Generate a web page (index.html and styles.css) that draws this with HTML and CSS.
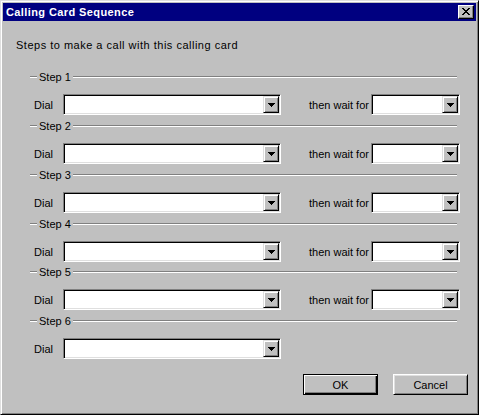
FILE: index.html
```html
<!DOCTYPE html>
<html>
<head>
<meta charset="utf-8">
<link rel="stylesheet" href="styles.css">
</head>
<body>
<div class="window">
  <div class="titlebar">
    <span class="title">Calling Card Sequence</span>
    <div class="close">
      <svg width="8" height="7" viewBox="0 0 8 7" shape-rendering="crispEdges"><path fill="#000" d="M0 0h2v1h-2z M6 0h2v1h-2z M1 1h2v1h-2z M5 1h2v1h-2z M2 2h4v1h-4z M3 3h2v1h-2z M2 4h4v1h-4z M1 5h2v1h-2z M5 5h2v1h-2z M0 6h2v1h-2z M6 6h2v1h-2z"/></svg>
    </div>
  </div>
  <div class="client">
    <div class="intro">Steps to make a call with this calling card</div>
    <div class="steps">
      <div class="group">
        <div class="header"><span class="seg"></span><span class="label">Step 1</span><span class="line"></span></div>
        <div class="row">
          <span class="dial">Dial</span>
          <div class="combo wide"><div class="drop"><svg width="7" height="4" viewBox="0 0 7 4" shape-rendering="crispEdges"><path d="M0 0h7v1h-1v1h-1v1h-1v1h-1v-1h-1v-1h-1v-1h-1z"/></svg></div></div>
          <span class="wait">then wait for</span>
          <div class="combo narrow"><div class="drop"><svg width="7" height="4" viewBox="0 0 7 4" shape-rendering="crispEdges"><path d="M0 0h7v1h-1v1h-1v1h-1v1h-1v-1h-1v-1h-1v-1h-1z"/></svg></div></div>
        </div>
      </div>
      <div class="group">
        <div class="header"><span class="seg"></span><span class="label">Step 2</span><span class="line"></span></div>
        <div class="row">
          <span class="dial">Dial</span>
          <div class="combo wide"><div class="drop"><svg width="7" height="4" viewBox="0 0 7 4" shape-rendering="crispEdges"><path d="M0 0h7v1h-1v1h-1v1h-1v1h-1v-1h-1v-1h-1v-1h-1z"/></svg></div></div>
          <span class="wait">then wait for</span>
          <div class="combo narrow"><div class="drop"><svg width="7" height="4" viewBox="0 0 7 4" shape-rendering="crispEdges"><path d="M0 0h7v1h-1v1h-1v1h-1v1h-1v-1h-1v-1h-1v-1h-1z"/></svg></div></div>
        </div>
      </div>
      <div class="group">
        <div class="header"><span class="seg"></span><span class="label">Step 3</span><span class="line"></span></div>
        <div class="row">
          <span class="dial">Dial</span>
          <div class="combo wide"><div class="drop"><svg width="7" height="4" viewBox="0 0 7 4" shape-rendering="crispEdges"><path d="M0 0h7v1h-1v1h-1v1h-1v1h-1v-1h-1v-1h-1v-1h-1z"/></svg></div></div>
          <span class="wait">then wait for</span>
          <div class="combo narrow"><div class="drop"><svg width="7" height="4" viewBox="0 0 7 4" shape-rendering="crispEdges"><path d="M0 0h7v1h-1v1h-1v1h-1v1h-1v-1h-1v-1h-1v-1h-1z"/></svg></div></div>
        </div>
      </div>
      <div class="group">
        <div class="header"><span class="seg"></span><span class="label">Step 4</span><span class="line"></span></div>
        <div class="row">
          <span class="dial">Dial</span>
          <div class="combo wide"><div class="drop"><svg width="7" height="4" viewBox="0 0 7 4" shape-rendering="crispEdges"><path d="M0 0h7v1h-1v1h-1v1h-1v1h-1v-1h-1v-1h-1v-1h-1z"/></svg></div></div>
          <span class="wait">then wait for</span>
          <div class="combo narrow"><div class="drop"><svg width="7" height="4" viewBox="0 0 7 4" shape-rendering="crispEdges"><path d="M0 0h7v1h-1v1h-1v1h-1v1h-1v-1h-1v-1h-1v-1h-1z"/></svg></div></div>
        </div>
      </div>
      <div class="group">
        <div class="header"><span class="seg"></span><span class="label">Step 5</span><span class="line"></span></div>
        <div class="row">
          <span class="dial">Dial</span>
          <div class="combo wide"><div class="drop"><svg width="7" height="4" viewBox="0 0 7 4" shape-rendering="crispEdges"><path d="M0 0h7v1h-1v1h-1v1h-1v1h-1v-1h-1v-1h-1v-1h-1z"/></svg></div></div>
          <span class="wait">then wait for</span>
          <div class="combo narrow"><div class="drop"><svg width="7" height="4" viewBox="0 0 7 4" shape-rendering="crispEdges"><path d="M0 0h7v1h-1v1h-1v1h-1v1h-1v-1h-1v-1h-1v-1h-1z"/></svg></div></div>
        </div>
      </div>
      <div class="group last">
        <div class="header"><span class="seg"></span><span class="label">Step 6</span><span class="line"></span></div>
        <div class="row">
          <span class="dial">Dial</span>
          <div class="combo wide"><div class="drop"><svg width="7" height="4" viewBox="0 0 7 4" shape-rendering="crispEdges"><path d="M0 0h7v1h-1v1h-1v1h-1v1h-1v-1h-1v-1h-1v-1h-1z"/></svg></div></div>
        </div>
      </div>
    </div>
    <div class="buttons">
      <div class="btn default">OK</div>
      <div class="btn">Cancel</div>
    </div>
  </div>
</div>
</body>
</html>
```

FILE: styles.css
```css
html, body {
  margin: 0;
  padding: 0;
  background: #c0c0c0;
}
body {
  font-family: "Liberation Sans", Arial, sans-serif;
  font-size: 11px;
  color: #000;
}
.window {
  width: 479px;
  height: 415px;
  box-sizing: border-box;
  background: #c0c0c0;
  border: 1px solid;
  border-color: #dfdfdf #000 #000 #dfdfdf;
  box-shadow: inset 1px 1px #fff, inset -1px -1px #808080;
  padding: 2px;
  display: flex;
  flex-direction: column;
}
.titlebar {
  height: 18px;
  flex: 0 0 18px;
  background: #000080;
  color: #fff;
  display: flex;
  align-items: center;
  justify-content: space-between;
  padding: 0 2px 0 3px;
  margin-bottom: 1px;
}
.title {
  font-weight: bold;
  font-size: 11px;
  letter-spacing: 0.4px;
  line-height: 18px;
}
.close {
  width: 16px;
  height: 14px;
  box-sizing: border-box;
  background: #c0c0c0;
  border: 1px solid;
  border-color: #fff #000 #000 #fff;
  box-shadow: inset -1px -1px #808080;
  display: flex;
  align-items: center;
  justify-content: center;
  padding: 0 1px 1px 0;
}
.close svg { display: block; }
.client {
  flex: 1;
  display: flex;
  flex-direction: column;
}
.intro {
  margin: 16px 0 0 13px;
  line-height: 14px;
  height: 14px;
  letter-spacing: 0.5px;
}
.steps {
  margin-top: 18px;
  display: flex;
  flex-direction: column;
  gap: 4px;
}
.group {
  display: flex;
  flex-direction: column;
  gap: 10px;
}
.group:nth-child(4) {
  margin-bottom: -1px;
}
.header {
  height: 14px;
  display: flex;
  align-items: center;
  margin: 0 19px 0 27px;
}
.seg, .line {
  height: 0;
  border-top: 1px solid #808080;
  border-bottom: 1px solid #fff;
}
.seg { width: 7px; }
.line { flex: 1; }
.label {
  padding: 0 2px;
  line-height: 14px;
}
.row {
  height: 21px;
  display: flex;
  align-items: center;
  padding-left: 31px;
}
.dial {
  width: 29px;
  flex: 0 0 29px;
}
.wait {
  margin-left: 28px;
  width: 62px;
  flex: 0 0 62px;
}
.combo {
  height: 21px;
  box-sizing: border-box;
  background: #fff;
  border: 1px solid;
  border-color: #808080 #fff #fff #808080;
  box-shadow: inset 1px 1px #000, inset -1px -1px #dfdfdf;
  padding: 1px;
  display: flex;
  justify-content: flex-end;
}
.combo.wide { width: 218px; flex: 0 0 218px; }
.combo.narrow { width: 89px; flex: 0 0 89px; }
.drop {
  width: 16px;
  height: 17px;
  box-sizing: border-box;
  background: #c0c0c0;
  border: 1px solid;
  border-color: #dfdfdf #000 #000 #dfdfdf;
  box-shadow: inset 1px 1px #fff, inset -1px -1px #808080;
  display: flex;
  align-items: center;
  justify-content: center;
}
.drop svg { display: block; }
.buttons {
  margin-top: 15px;
  display: flex;
  gap: 15px;
  padding-left: 300px;
}
.btn {
  width: 75px;
  height: 21px;
  box-sizing: border-box;
  border: 1px solid;
  border-color: #fff #000 #000 #fff;
  box-shadow: inset 1px 1px #dfdfdf, inset -1px -1px #808080;
  display: flex;
  align-items: center;
  justify-content: center;
  font-size: 11px;
}
.btn.default {
  border-color: #000;
  box-shadow: inset 1px 1px #fff, inset -1px -1px #000, inset -2px -2px #808080;
}
```
